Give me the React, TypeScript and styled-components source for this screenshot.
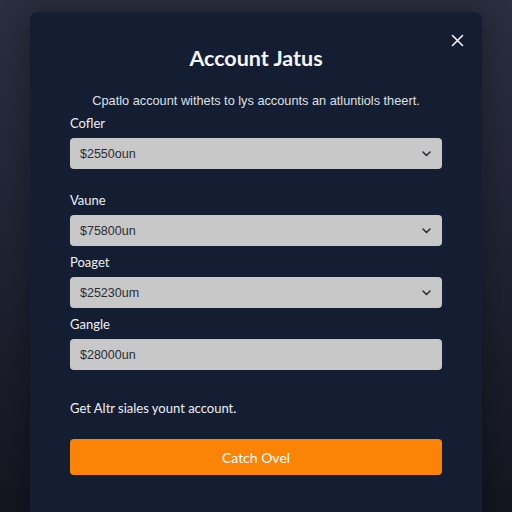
import React from "react";
import styled, { createGlobalStyle } from "styled-components";

const GlobalStyle = createGlobalStyle`
  html, body {
    margin: 0;
    height: 100%;
  }
  body {
    background: linear-gradient(180deg, #2b2e40 0%, #1e2130 55%, #14161f 100%);
    font-family: Lato, "Open Sans", sans-serif;
    overflow: hidden;
  }
`;

const fields = [
  { label: "Cofler", value: "$2550oun", select: true, gap: 6 },
  { label: "Vaune", value: "$75800un", select: true, gap: 23 },
  { label: "Poaget", value: "$25230um", select: true, gap: 8 },
  { label: "Gangle", value: "$28000un", select: false, gap: 8 },
];

const App = () => {
  return (
    <>
      <GlobalStyle />
      <Modal>
        <CloseButton aria-label="Close">
          <svg width="13" height="13" viewBox="0 0 13 13">
            <path d="M1.5 1.5 L11.5 11.5 M11.5 1.5 L1.5 11.5" stroke="#f2f3f6" strokeWidth="1.6" strokeLinecap="round" />
          </svg>
        </CloseButton>

        <Title>Account Jatus</Title>
        <Subtitle>Cpatlo account withets to lys accounts an atluntiols theert.</Subtitle>

        {fields.map((f) => (
          <Field key={f.label} $gap={f.gap}>
            <Label>{f.label}</Label>
            <Input>
              <span>{f.value}</span>
              {f.select && (
                <svg width="9" height="6" viewBox="0 0 9 6">
                  <path d="M1 1 L4.5 4.5 L8 1" fill="none" stroke="#2a2d36" strokeWidth="1.5" strokeLinecap="round" strokeLinejoin="round" />
                </svg>
              )}
            </Input>
          </Field>
        ))}

        <Note>Get Altr siales yount account.</Note>
        <SubmitButton>Catch Ovel</SubmitButton>
      </Modal>
    </>
  );
};

const Modal = styled.div`
  position: relative;
  box-sizing: border-box;
  width: 452px;
  height: 520px;
  margin: 12px 0 0 30px;
  padding: 34px 40px 0;
  background: #141e33;
  border-radius: 8px;
  box-shadow: 0 0 30px rgba(0, 0, 0, 0.35);
  display: flex;
  flex-direction: column;
`;

const CloseButton = styled.button`
  position: absolute;
  top: 18px;
  right: 15px;
  width: 20px;
  height: 20px;
  padding: 0;
  border: none;
  background: none;
  display: flex;
  align-items: center;
  justify-content: center;
`;

const Title = styled.h2`
  margin: 0;
  text-align: center;
  font-size: 21.5px;
  line-height: 24px;
  font-weight: 700;
  color: #f6f7fa;
`;

const Subtitle = styled.p`
  margin: 23px 0 0;
  text-align: center;
  font-family: "Liberation Sans", Arial, sans-serif;
  font-size: 12.75px;
  line-height: 16px;
  color: #dde0e6;
`;

const Field = styled.div<{ $gap: number }>`
  margin-top: ${(p) => p.$gap}px;
  display: flex;
  flex-direction: column;
  gap: 7px;
`;

const Label = styled.label`
  font-size: 13px;
  line-height: 16px;
  color: #eef0f4;
`;

const Input = styled.div`
  box-sizing: border-box;
  height: 31px;
  padding: 0 11px 0 10px;
  background: #c8c8c8;
  border-radius: 4px;
  display: flex;
  align-items: center;
  justify-content: space-between;
  font-family: "Liberation Sans", Arial, sans-serif;
  font-size: 12.5px;
  color: #2b2d33;
`;

const Note = styled.p`
  margin: 30px 0 0;
  font-size: 13px;
  line-height: 16px;
  color: #eef0f4;
`;

const SubmitButton = styled.button`
  margin-top: 23px;
  height: 36px;
  border: none;
  border-radius: 4px;
  background: #fb8406;
  color: #fff;
  font-family: Lato, sans-serif;
  font-size: 14px;
`;

export default App;
